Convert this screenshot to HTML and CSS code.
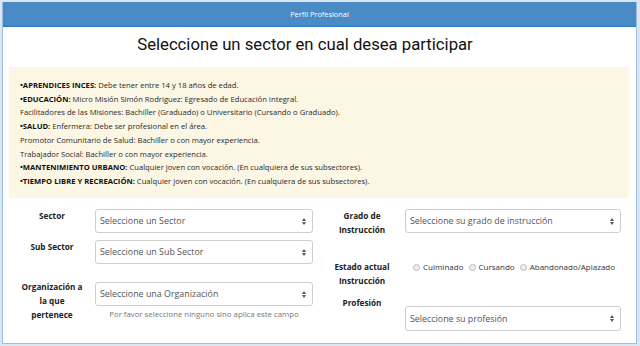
FILE: index.html
```html
<!DOCTYPE html>
<html lang="es">
<head>
  <meta charset="UTF-8">
  <meta name="viewport" content="width=device-width, initial-scale=1.0">
  <title>Perfil Profesional</title>
  <link rel="stylesheet" href="styles.css">
</head>
<body>
  <div class="panel">
    <div class="panel-heading">Perfil Profesional</div>
    <div class="panel-body">
      <h3 class="title">Seleccione un sector en cual desea participar</h3>

      <div class="notice">
        <p><b>•APRENDICES INCES:</b> Debe tener entre 14 y 18 años de edad.</p>
        <p><b>•EDUCACIÓN:</b> Micro Misión Simón Rodriguez: Egresado de Educación Integral.</p>
        <p>Facilitadores de las Misiones: Bachiller (Graduado) o Universitario (Cursando o Graduado).</p>
        <p><b>•SALUD:</b> Enfermera: Debe ser profesional en el área.</p>
        <p>Promotor Comunitario de Salud: Bachiller o con mayor experiencia.</p>
        <p>Trabajador Social: Bachiller o con mayor experiencia.</p>
        <p><b>•MANTENIMIENTO URBANO:</b> Cualquier joven con vocación. (En cualquiera de sus subsectores).</p>
        <p><b>•TIEMPO LIBRE Y RECREACIÓN:</b> Cualquier joven con vocación. (En cualquiera de sus subsectores).</p>
      </div>

      <form class="form-grid">
        <div class="form-col">
          <div class="form-row">
            <label class="form-label">Sector</label>
            <div class="form-field">
              <div class="select">Seleccione un Sector<span class="caret"></span></div>
            </div>
          </div>
          <div class="form-row">
            <label class="form-label">Sub Sector</label>
            <div class="form-field">
              <div class="select">Seleccione un Sub Sector<span class="caret"></span></div>
            </div>
          </div>
          <div class="form-row row-org">
            <label class="form-label">Organización a la que pertenece</label>
            <div class="form-field">
              <div class="select">Seleccione una Organización<span class="caret"></span></div>
              <p class="help">Por favor seleccione ninguno sino aplica este campo</p>
            </div>
          </div>
        </div>

        <div class="form-col right">
          <div class="form-row">
            <label class="form-label">Grado de Instrucción</label>
            <div class="form-field">
              <div class="select">Seleccione su grado de instrucción<span class="caret"></span></div>
            </div>
          </div>
          <div class="form-row row-estado">
            <label class="form-label">Estado actual Instrucción</label>
            <div class="form-field radios">
              <span class="radio"><i></i>Culminado</span>
              <span class="radio"><i></i>Cursando</span>
              <span class="radio"><i></i>Abandonado/Aplazado</span>
            </div>
          </div>
          <div class="form-row row-prof">
            <label class="form-label">Profesión</label>
            <div class="form-field">
              <div class="select tall">Seleccione su profesión<span class="caret"></span></div>
            </div>
          </div>
        </div>
      </form>
    </div>
  </div>
</body>
</html>
```

FILE: styles.css
```css
body {
  margin: 0;
  padding: 2px 3px 1px 2px;
  background: #d8e7f2;
  font-family: "Open Sans", Arial, sans-serif;
  color: #333;
}

.panel {
  background: #fff;
  border: 1px solid #9dbfdf;
  border-top: none;
  height: 342px;
  box-sizing: border-box;
}

.panel-heading {
  background: #4a8bc6;
  border-bottom: 2px solid #2e83d3;
  color: #fff;
  font-size: 7.4px;
  text-align: center;
  height: 23px;
  line-height: 24px;
}

.panel-body {
  padding: 0 7px 0 6px;
}

.title {
  font-family: Roboto, Arial, sans-serif;
  font-weight: 400;
  font-size: 16.7px;
  color: #111;
  text-align: center;
  margin: 0;
  padding: 8px 28px 0 0;
  height: 32px;
  line-height: 20px;
}

.notice {
  background: #fcf6e4;
  padding: 12px 11px 9px;
  font-size: 7.65px;
  line-height: 13.7px;
  color: #2a2a2a;
}

.notice p {
  margin: 0;
}

.notice b {
  color: #111;
}

.form-grid {
  display: grid;
  grid-template-columns: 1fr 1fr;
  margin-top: 11px;
}

.form-row {
  display: flex;
  margin-bottom: 7px;
}

.form-label {
  width: 86px;
  flex-shrink: 0;
  box-sizing: border-box;
  padding: 0 9px;
  text-align: center;
  font-weight: 700;
  font-size: 8.2px;
  line-height: 14px;
  color: #222;
}

.form-field {
  flex: 1;
  padding-right: 6px;
}

.right .form-field {
  padding-right: 8px;
}

.select {
  position: relative;
  height: 22px;
  border: 1px solid #cfcfcf;
  border-radius: 3px;
  font-size: 8.9px;
  line-height: 22px;
  padding-left: 4px;
  color: #555;
}

.select.tall {
  height: 23px;
  line-height: 23px;
}

.caret {
  position: absolute;
  right: 6px;
  top: 8px;
  width: 0;
  height: 0;
  border-left: 2px solid transparent;
  border-right: 2px solid transparent;
  border-bottom: 3px solid #555;
}

.caret::after {
  content: "";
  position: absolute;
  left: -2px;
  top: 4px;
  border-left: 2px solid transparent;
  border-right: 2px solid transparent;
  border-top: 3px solid #555;
}

.row-org {
  margin-top: 16px;
}

.row-org .select {
  margin-top: 2px;
}

.help {
  margin: 1px 0 0;
  text-align: center;
  font-size: 7.8px;
  line-height: 14px;
  color: #777;
}

.row-estado {
  margin-top: 23px;
  margin-bottom: 8px;
}

.radios {
  font-size: 8px;
  line-height: 14px;
  color: #333;
  padding-left: 8px;
}

.radio {
  margin-right: 3px;
}

.radio i {
  display: inline-block;
  width: 5px;
  height: 5px;
  border: 1px solid #bbb;
  border-radius: 50%;
  background: #eee;
  margin-right: 3px;
  vertical-align: -1px;
}

.row-prof .select {
  margin-top: 10px;
}
```
